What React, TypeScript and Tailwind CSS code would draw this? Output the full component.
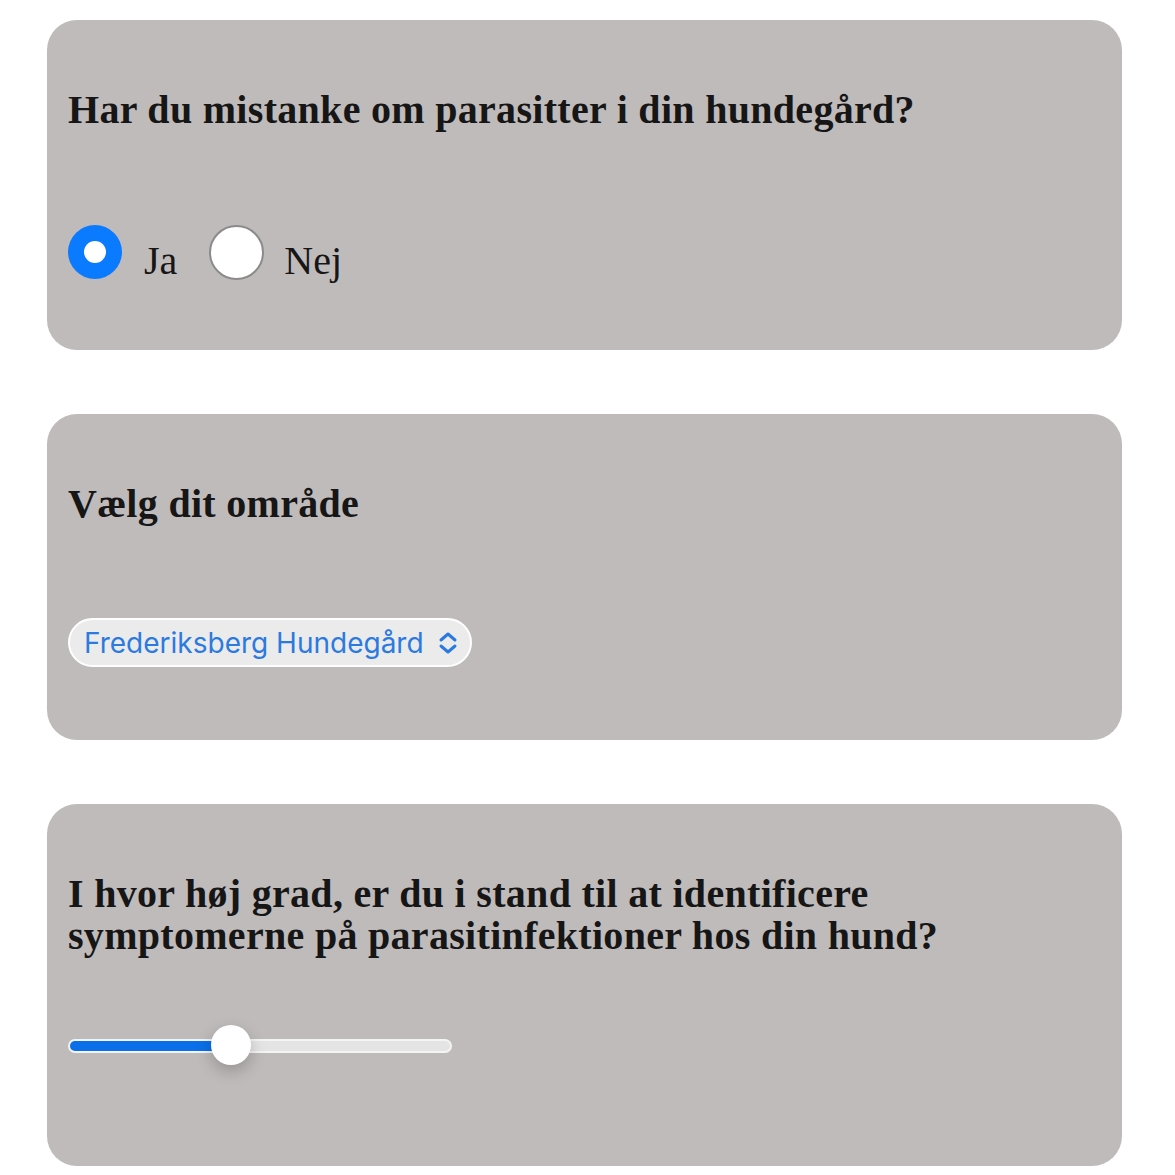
import React from "react";

const serif = { fontFamily: '"Liberation Serif", "Times New Roman", serif' };

function Card({ children, className = "" }: { children: React.ReactNode; className?: string }) {
  return (
    <div className={`rounded-[30px] bg-[#c0bbbb] px-[21px] pt-[69px] ${className}`}>{children}</div>
  );
}

export default function App() {
  return (
    <div className="min-h-[1175px] w-[1175px] bg-white pt-[20px] pl-[47px]" style={serif}>
      <div className="flex w-[1075px] flex-col gap-[64px]">
        <Card className="h-[330px]">
          <h2 className="text-[40px] font-bold leading-[42px] tracking-[0.3px] text-[#161616]">
            Har du mistanke om parasitter i din hundegård?
          </h2>
          <div className="mt-[94px] flex items-start">
            <div className="flex h-[54px] w-[54px] items-center justify-center rounded-full bg-[#0a7aff]">
              <div className="h-[22px] w-[22px] rounded-full bg-white" />
            </div>
            <span className="ml-[22px] mt-[15px] text-[40px] leading-[42px] text-[#161616]">Ja</span>
            <div className="ml-[32px] h-[55px] w-[55px] rounded-full border-[2.5px] border-[#8b8b8b] bg-white" />
            <span className="ml-[20px] mt-[15px] text-[40px] leading-[42px] text-[#161616]">Nej</span>
          </div>
        </Card>

        <Card className="h-[326px]">
          <h2 className="text-[40px] font-bold leading-[42px] tracking-[0.3px] text-[#161616]">Vælg dit område</h2>
          <div className="mt-[93px] flex">
            <div
              className="flex h-[49px] items-center gap-[14px] rounded-full border-[2px] border-white bg-[#ebebeb] pl-[14px] pr-[12px]"
              style={{ fontFamily: 'Inter, "Noto Sans", sans-serif' }}
            >
              <span className="text-[28px] text-[#2b7ae0]">Frederiksberg Hundegård</span>
              <svg width="20" height="24" viewBox="0 0 20 24" fill="none" stroke="#2b7ae0" strokeWidth="3" strokeLinecap="round" strokeLinejoin="round">
                <path d="M3 9 L10 3 L17 9" />
                <path d="M3 15 L10 21 L17 15" />
              </svg>
            </div>
          </div>
        </Card>

        <Card className="h-[362px]">
          <h2 className="text-[40px] font-bold leading-[41.5px] tracking-[0.3px] text-[#161616]">
            I hvor høj grad, er du i stand til at identificere
            <br />
            symptomerne på parasitinfektioner hos din hund?
          </h2>
          <div className="relative mt-[67px] h-[44px] w-[384px]">
            <div className="absolute left-0 right-0 top-[16px] h-[14px] overflow-hidden rounded-full border-[2px] border-[#f4f4f4] bg-[#e4e4e4]">
              <div className="h-full w-[162px] bg-[#0a6fe8]" />
            </div>
            <div className="absolute left-[143px] top-[2px] h-[40px] w-[40px] rounded-full bg-white shadow-[0_6px_16px_rgba(0,0,0,0.22)]" />
          </div>
        </Card>
      </div>
    </div>
  );
}
